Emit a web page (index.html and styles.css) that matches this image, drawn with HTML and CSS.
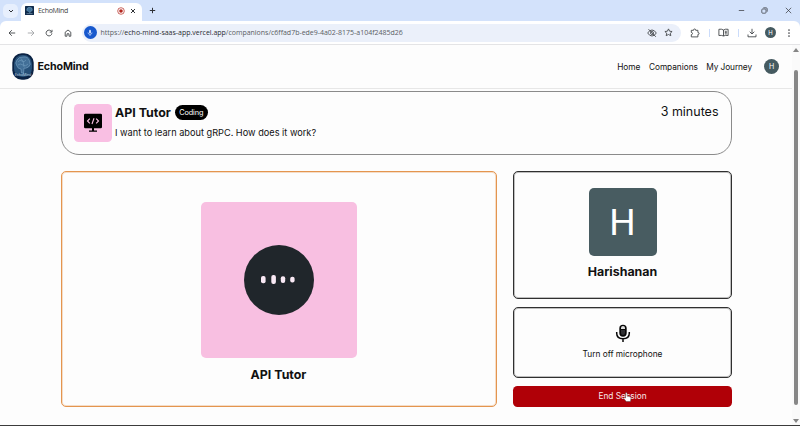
FILE: index.html
```html
<!DOCTYPE html>
<html lang="en">
<head>
<meta charset="utf-8">
<title>EchoMind</title>
<link rel="stylesheet" href="styles.css">
</head>
<body>
<div class="window">
  <header class="tabstrip">
    <span class="tab-search"><svg width="6" height="6" viewBox="0 0 6 6"><path d="M1 2l2 2 2-2"/></svg></span>
    <div class="tab">
      <svg class="favicon" width="9" height="9" viewBox="0 0 9 9"><rect width="9" height="9" rx=".5" fill="#102b4b"/><path d="M2 5Q1 2 4 1.3Q7.5 1 7.3 4Q7 5.5 5 5.5V7" fill="#407198" stroke="#78a8c8" stroke-width=".5"/><path d="M1.5 7.6h6" stroke="#a5c4d8" stroke-width=".5"/></svg>
      <span class="tab-title">EchoMind</span>
      <svg class="rec" width="8" height="8" viewBox="0 0 8 8"><circle cx="4" cy="4" r="3.3" fill="none" stroke="#b3261e" stroke-width=".7"/><circle cx="4" cy="4" r="1.800" fill="#b3261e"/></svg>
      <svg class="close" width="6" height="6" viewBox="0 0 6 6"><path d="M1 1l4 4M5 1L1 5"/></svg>
    </div>
    <svg class="newtab" width="7" height="7" viewBox="0 0 7 7"><path d="M3.5 .8v5.4M.8 3.5h5.4"/></svg>
    <div class="controls">
      <svg width="7" height="7" viewBox="0 0 7 7"><path d="M.8 3.5h5.4"/></svg>
      <svg width="7" height="7" viewBox="0 0 7 7"><rect x=".8" y="2" width="4.2" height="4.2" rx=".8"/><path d="M2.3 .8h2.8q1.1 0 1.1 1.1v2.8"/></svg>
      <svg width="7" height="7" viewBox="0 0 7 7"><path d="M.8 .8l5.4 5.4M6.2 .8L.8 6.2"/></svg>
    </div>
  </header>
  <div class="toolbar">
    <div class="navicons">
      <svg width="8" height="8" viewBox="0 0 8 8"><path d="M7.2 4H1M3.8 1.2L1 4l2.8 2.8"/></svg>
      <svg class="dim" width="8" height="8" viewBox="0 0 8 8"><path d="M.8 4H7M4.2 1.2L7 4 4.2 6.8"/></svg>
      <svg width="8" height="8" viewBox="0 0 8 8"><path d="M6.6 2.7A2.9 2.9 0 1 0 6.9 4.3M7 .8v2.3H4.7"/></svg>
      <svg width="8" height="8" viewBox="0 0 8 8"><path d="M1.2 3.2L4 1l2.8 2.2v4H5V4.8H3v2.4H1.2z"/></svg>
    </div>
    <div class="omnibox">
      <span class="mic-chip"><svg width="6" height="8" viewBox="0 0 6 8"><rect x="2" y=".8" width="2" height="3.6" rx="1" fill="#c9dafb"/><path d="M1 3.5q0 2 2 2t2-2M3 5.5V7" fill="none" stroke="#c9dafb" stroke-width=".7"/></svg></span>
      <span class="url">https://<b>echo-mind-saas-app.vercel.app</b>/companions/c6ffad7b-ede9-4a02-8175-a104f2485d26</span>
      <svg class="eye" width="10" height="10" viewBox="0 0 10 10"><path d="M.7 5Q2.5 2 5 2t4.3 3Q7.500 8 5 8T.7 5zM1.500 1.200l7.300 7.600"/><circle cx="5" cy="5" r="1.500"/></svg>
      <svg width="9" height="9" viewBox="0 0 9 9"><path d="M4.500 .9l1.100 2.300 2.500.3-1.800 1.700.5 2.500-2.300-1.200-2.300 1.200.5-2.500L.9 3.500l2.500-.3z"/></svg>
    </div>
    <div class="actions">
      <svg width="10" height="10" viewBox="0 0 10 10"><path d="M1.300 2.300h2.200Q3.500 1 4.600 1t1.100 1.300h2.200v2.200q1.200 0 1.200 1T7.900 6.500V8.900H1.300V6.700q1.200-.2 1.200-1.200T1.300 4.400z"/></svg>
      <i></i>
      <svg width="11" height="9" viewBox="0 0 11 9"><path d="M5.500 2Q3.500 .7 .9 1.300V7.500Q3.500 7 5.500 8 7.500 7 10.100 7.500V1.300Q7.500 .7 5.500 2zM5.500 2V8M6.800 3.300h2M6.800 4.600h2M6.800 5.900h2"/></svg>
      <i></i>
      <svg width="10" height="10" viewBox="0 0 10 10"><path d="M5 .8v5M2.700 3.700L5 6l2.300-2.300M1 6.500v2.300h8V6.500"/></svg>
      <span class="profile">H</span>
      <svg class="more" width="4" height="10" viewBox="0 0 4 10"><circle cx="2" cy="2" r=".85"/><circle cx="2" cy="5" r=".85"/><circle cx="2" cy="8" r=".85"/></svg>
    </div>
  </div>
  <div class="viewport">
    <div class="page">
      <nav class="navbar">
        <svg class="logo" width="22" height="27" viewBox="0 0 22 27"><rect x=".3" y=".3" width="21.400" height="26.400" rx="9.500" fill="#0b2344"/><rect x="2" y="2" width="18" height="22" rx="8.500" fill="#265078"/><path d="M5 13Q2.500 10 5 7Q7 3.500 11 4Q16 3 17.500 8Q19.500 12 16.500 14Q13 16 12 15L11.500 20H9.500L9 16Q6 16 5 13z" fill="#426f97" stroke="#729bbd" stroke-width=".7"/><path d="M6 9Q8 6 10 8T14 7M6 12Q8 10 11 12T16 11M9 5.500Q12 8 12 14" fill="none" stroke="#7da7c7" stroke-width=".5"/><text class="logo-text" x="11" y="22.500" text-anchor="middle">EchoMind</text></svg>
        <span class="brand">EchoMind</span>
        <div class="links"><a class="l-home">Home</a><a class="l-comp">Companions</a><a class="l-jour">My Journey</a><span class="user">H</span></div>
      </nav>
      <main class="session">
        <section class="summary">
          <div class="subject-icon"><svg width="20" height="20" viewBox="0 0 20 20"><path d="M2.300 .8h15.400q1.300 0 1.300 1.300v11.800q0 1.300-1.300 1.300H11v2.300h3v1.300H6v-1.300h3v-2.300H2.300Q1 15.200 1 13.900V2.100Q1 .8 2.300 .8z"/><path d="M6.800 5.700L4.500 8l2.300 2.300M13.200 5.700L15.500 8l-2.300 2.300M11 5.200L9 11" fill="none" stroke="#f9bfe3" stroke-width="1.100"/></svg></div>
          <div class="info">
            <div class="title-row"><h1>API Tutor</h1><span class="badge">Coding</span></div>
            <p>I want to learn about gRPC. How does it work?</p>
          </div>
          <div class="duration">3 minutes</div>
        </section>
        <section class="stage">
          <div class="companion">
            <div class="avatar-pink"><div class="orb"><svg width="70" height="70" viewBox="0 0 70 70"><g fill="#f9e9f5"><rect x="17" y="31" width="4.600" height="7.200" rx="2"/><rect x="27.300" y="30" width="4.600" height="9" rx="2"/><rect x="36.800" y="31.300" width="4.400" height="6.600" rx="2"/><rect x="46.200" y="31.700" width="4.400" height="5.800" rx="2"/></g></svg></div></div>
            <h2 class="tutor-name">API Tutor</h2>
          </div>
          <div class="side">
            <div class="user-card"><div class="avatar-user">H</div><h2 class="user-name">Harishanan</h2></div>
            <button class="mic-card"><svg width="16" height="19" viewBox="0 0 16 19"><rect x="4.300" y=".7" width="7.400" height="12" rx="3.700" fill="#080808"/><path d="M6 5V4Q6 2 8 2t2 2v1z" fill="#ddd"/><path d="M6 6h4v3q0 2-2 2T6 9z" fill="#303033"/><path d="M1.700 8v1.300Q1.700 14.800 8 14.800t6.300-5.500V8M8 14.800v3.200" fill="none" stroke="#080808" stroke-width="1.500"/></svg><span>Turn off microphone</span></button>
            <button class="end"><span>End Session</span><svg class="cursor" width="9" height="11" viewBox="0 0 9 11"><path d="M2.500 6V1.200q.1-.8.800-.8t.8.800v3l3 .6q1 .2.900 1.200L7.500 9.500H3.200L.8 6.500q-.2-.9.700-.9z" fill="#fff" stroke="#46333a" stroke-width=".45"/></svg></button>
          </div>
        </section>
      </main>
    </div>
    <div class="scrollbar"><i class="up"></i><i class="thumb"></i><i class="down"></i></div>
  </div>
</div>
</body>
</html>
```
FILE: styles.css
```css
* { box-sizing: border-box; }
body { margin: 0; background: #fdfdfd; color: #111; font-family: Inter, "Liberation Sans", sans-serif; }
svg { display: block; flex: none; }
h1, h2, p { margin: 0; }
button { font: inherit; color: inherit; padding: 0; }
.window { width: 800px; height: 426px; display: flex; flex-direction: column; border-bottom: 1px solid #3b3b3b; overflow: hidden; white-space: nowrap; background: #d3e2fb; }

.tabstrip { height: 21px; flex: none; display: flex; align-items: center; padding-left: 3px; }
.tabstrip svg { fill: none; stroke: #303236; stroke-width: 1; }
.tab-search { width: 15px; height: 14px; border-radius: 5px; background: #e7effd; display: grid; place-items: center; }
.tab { align-self: flex-end; width: 121px; height: 18px; margin-left: 3px; padding: 0 6px 3px 4px; border-radius: 6px 6px 0 0; background: #fff; display: flex; align-items: center; }
.tab-title { margin-left: 4px; font: 7px "Open Sans", sans-serif; letter-spacing: -.45px; color: #3d3f43; }
.tab-title { letter-spacing: -.3px; }
.tabstrip .favicon, .tabstrip .rec { stroke: none; }
.rec { margin-left: auto; }
.close { margin-left: 5.500px; }
.newtab { margin-left: 7px; }
.controls { margin-left: auto; display: flex; gap: 16.500px; padding-right: 8.500px; }
.tabstrip .controls svg { stroke-width: .7; }

.toolbar { height: 24px; flex: none; display: flex; align-items: center; padding-left: 8px; background: #fff; border-bottom: 1px solid #e4e4e6; border-radius: 6px 6px 0 0; }
.toolbar svg { fill: none; stroke: #44474b; stroke-width: .9; }
.navicons { display: flex; gap: 10.700px; }
.navicons .dim { stroke: #a2a4a7; }
.omnibox { width: 599px; height: 18px; margin-left: 10px; border-radius: 9px; background: #ebf0fa; display: flex; align-items: center; padding: 0 8px 0 1.500px; }
.mic-chip { width: 13px; height: 13px; border-radius: 50%; background: #1758cd; display: grid; place-items: center; }
.mic-chip svg { stroke: none; }
.url { margin-left: 4px; font: 7px "Open Sans", sans-serif; letter-spacing: -.01px; color: #5a5d63; }
.url b { font-weight: 400; color: #292b30; }
.eye { margin-left: auto; margin-right: 7px; }
.actions { flex: 1; display: flex; align-items: center; padding-left: 9px; }
.actions i { width: 1px; height: 8px; background: #cbdcfb; margin: 0 8.500px; }
.profile, .user { border-radius: 50%; background: #455a60; color: #fff; display: grid; place-items: center; }
.profile { width: 11px; height: 11px; margin-left: 8px; font-size: 6px; }
.toolbar .more { fill: #44474b; stroke: none; margin-left: 11px; }

.viewport { flex: 1; min-height: 0; display: flex; background: #fdfdfd; }
.page { width: 792px; flex: none; }
.navbar { height: 44px; display: flex; align-items: center; padding: 0 13px 0 12px; border-bottom: 1px solid #e7e7e7; }
.logo-text { font-size: 3.500px; fill: #c7dce9; }
.brand { margin-left: 3.500px; font-size: 10.700px; font-weight: 700; letter-spacing: -.13px; }
.links { margin-left: auto; display: flex; align-items: center; font-size: 8.300px; }
.l-comp, .l-jour { margin-left: 8.500px; }
.l-jour { letter-spacing: -.1px; }
.l-comp { letter-spacing: -.04px; }
.user { width: 15px; height: 15px; margin-left: 12px; font-size: 7px; }

.session { width: 671px; margin: 2px 0 0 61px; }
.summary { height: 64px; border: 1px solid #8b8b8b; border-radius: 18px; padding: 12px 12.500px 0 12px; display: flex; align-items: flex-start; }
.subject-icon { width: 37.500px; height: 37.500px; border-radius: 4.500px; background: #f9bfe3; display: grid; place-items: center; }
.info { margin-left: 3.500px; }
.title-row { display: flex; align-items: center; height: 17px; gap: 4px; }
h1, .tutor-name { font-size: 12.400px; line-height: 16px; font-weight: 700; }
.badge { width: 33px; height: 15px; border-radius: 8px; background: #000; color: #fff; font-size: 7.300px; letter-spacing: -.1px; display: grid; place-items: center; }
.info p { margin-top: 5.500px; font-size: 9.200px; line-height: 12px; }
.duration { margin-left: auto; font-size: 12.500px; line-height: 15px; }

.stage { margin-top: 16px; display: grid; grid-template-columns: 436px 219px; gap: 16px; height: 236px; }
.companion, .user-card, .mic-card { border: 1px solid #303030; border-radius: 5px; box-shadow: inset 0 0 0 1px #3030304d; display: flex; flex-direction: column; align-items: center; }
.companion { border-color: #e4954f; box-shadow: inset 0 0 0 1px #e4954f4d; padding-top: 30px; padding-right: 1px; }
.avatar-pink { width: 156px; height: 156px; border-radius: 5px; background: #f8bfe1; display: grid; place-items: center; }
.orb { width: 70px; height: 70px; border-radius: 50%; background: #20262b; }
.tutor-name { margin-top: 9px; }
.side { display: flex; flex-direction: column; }
.user-card { height: 127.500px; padding-top: 16px; }
.avatar-user { width: 68px; height: 68px; border-radius: 5px; background: #485c61; color: #fff; font: 37px Roboto, sans-serif; display: grid; place-items: center; }
.user-name { margin-top: 8px; font-size: 12.400px; line-height: 16px; font-weight: 700; }
.mic-card { margin-top: 8px; height: 71px; background: none; padding-top: 16px; font-size: 8.300px; }
.mic-card span { margin-top: 5px; line-height: 12px; }
.end { position: relative; margin-top: 8px; height: 21px; border: 0; border-radius: 4.500px; background: #b00007; color: #f9e9ea; font-size: 8.300px; }
.cursor { position: absolute; left: 110px; top: 6px; }

.scrollbar { flex: 1; display: flex; flex-direction: column; align-items: center; background: #fafafa; padding: 3px 0 2px; }
.scrollbar .up, .scrollbar .down { border: 3px solid transparent; flex: none; }
.scrollbar .up { border-top: 0; border-bottom: 4px solid #858585; }
.scrollbar .down { border-bottom: 0; border-top: 4px solid #858585; margin-top: auto; }
.thumb { width: 4.500px; height: 335px; margin-top: 18px; border-radius: 2px; background: #878787; }
```
